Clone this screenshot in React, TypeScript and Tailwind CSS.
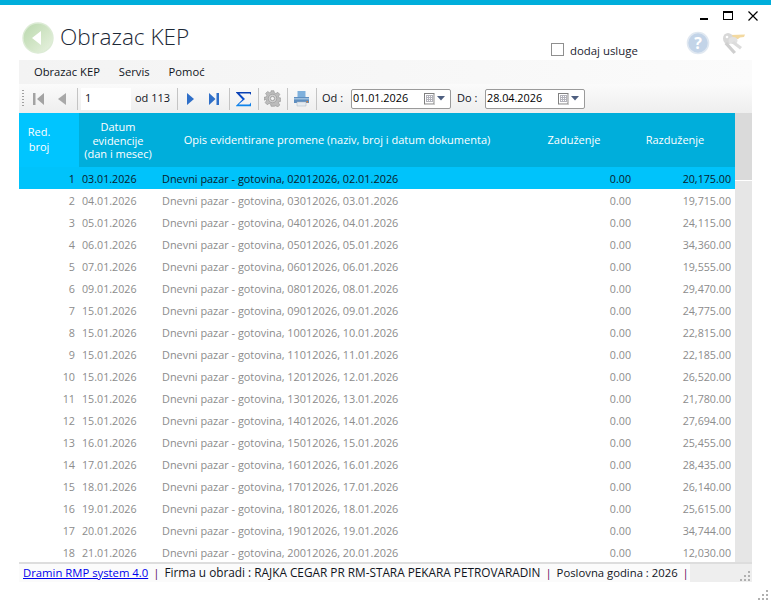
const rows = [
  ["1", "03.01.2026", "02012026, 02.01.2026", "20,175.00"],
  ["2", "04.01.2026", "03012026, 03.01.2026", "19,715.00"],
  ["3", "05.01.2026", "04012026, 04.01.2026", "24,115.00"],
  ["4", "06.01.2026", "05012026, 05.01.2026", "34,360.00"],
  ["5", "07.01.2026", "06012026, 06.01.2026", "19,555.00"],
  ["6", "09.01.2026", "08012026, 08.01.2026", "29,470.00"],
  ["7", "15.01.2026", "09012026, 09.01.2026", "24,775.00"],
  ["8", "15.01.2026", "10012026, 10.01.2026", "22,815.00"],
  ["9", "15.01.2026", "11012026, 11.01.2026", "22,185.00"],
  ["10", "15.01.2026", "12012026, 12.01.2026", "26,520.00"],
  ["11", "15.01.2026", "13012026, 13.01.2026", "21,780.00"],
  ["12", "15.01.2026", "14012026, 14.01.2026", "27,694.00"],
  ["13", "16.01.2026", "15012026, 15.01.2026", "25,455.00"],
  ["14", "17.01.2026", "16012026, 16.01.2026", "28,435.00"],
  ["15", "18.01.2026", "17012026, 17.01.2026", "26,140.00"],
  ["16", "19.01.2026", "18012026, 18.01.2026", "25,615.00"],
  ["17", "20.01.2026", "19012026, 19.01.2026", "34,744.00"],
  ["18", "21.01.2026", "20012026, 20.01.2026", "12,030.00"],
];

const Sep = () => <div className="w-px h-[22px] bg-[#c4c4c4] shrink-0" />;

const BackIcon = () => (
  <svg width="32" height="32" viewBox="0 0 32 32">
    <defs>
      <linearGradient id="bk" x1="0" y1="0" x2="1" y2="1">
        <stop offset="0" stopColor="#b9d8ad" />
        <stop offset="0.55" stopColor="#d3e6c8" />
        <stop offset="1" stopColor="#e9f3e2" />
      </linearGradient>
    </defs>
    <circle cx="16" cy="16" r="15" fill="url(#bk)" stroke="#dcebd5" strokeWidth="1.4" />
    <path d="M10 16 L19 9 V23 Z" fill="#ffffff" />
  </svg>
);

const HelpIcon = () => (
  <svg width="24" height="24" viewBox="0 0 24 24">
    <circle cx="12" cy="12" r="10.5" fill="#c3d4e8" stroke="#e0e8f1" strokeWidth="1.6" />
    <text x="12" y="17.5" textAnchor="middle" fontSize="16" fontWeight="700" fill="#ffffff" fontFamily="Open Sans, sans-serif">?</text>
  </svg>
);

const KeysIcon = () => (
  <svg width="24" height="23" viewBox="0 0 24 23">
    <path d="M8 3 L23 2.500 L22 5 L18 5.500 L16 7 L9 7 Z" fill="#f3d9a0" />
    <ellipse cx="6" cy="6.500" rx="5" ry="5.500" fill="#d8d8d8" />
    <circle cx="5" cy="5" r="1.300" fill="#ffffff" />
    <path d="M5 10 L14 20 L11.500 22 L2.500 12 Z" fill="#cfcfcf" />
    <ellipse cx="11" cy="8.500" rx="4.500" ry="3.500" fill="#e2e2e2" />
    <path d="M12 9 L20 15 L18 17.500 L9.500 11 Z" fill="#dcdcdc" />
  </svg>
);

const SigmaIcon = () => (
  <svg width="17" height="16" viewBox="0 0 17 16">
    <defs>
      <linearGradient id="sg" x1="0" y1="0" x2="0" y2="1">
        <stop offset="0" stopColor="#0a3fb0" />
        <stop offset="0.5" stopColor="#0a50d0" />
        <stop offset="1" stopColor="#0d8cf0" />
      </linearGradient>
    </defs>
    <path d="M1 1 H16 V4 L14.800 2.500 H4.500 L10 8 L3.500 13.500 H14.500 L16 11.500 V15.300 H1 V14.800 L7.500 8.500 L1 1.500 Z" fill="url(#sg)" />
  </svg>
);

const GearIcon = () => (
  <svg width="17" height="17" viewBox="0 0 24 24">
    <path
      d="M10 1h4l.7 3.200 2 .8 2.800-1.700 2.800 2.800-1.700 2.800.8 2 3.100.7v4l-3.200.7-.8 2 1.700 2.800-2.800 2.800-2.800-1.700-2 .8L14 23h-4l-.7-3.200-2-.8-2.800 1.700-2.800-2.800 1.700-2.800-.8-2L0 14.400v-4l3.200-.7.8-2L2.300 4.900l2.800-2.800 2.800 1.700 2-.8z"
      fill="#bcbcbc"
      stroke="#8e8e8e"
      strokeWidth="0.8"
    />
    <circle cx="12" cy="12" r="6" fill="#d0d0d0" stroke="#9a9a9a" />
    <circle cx="12" cy="12" r="3" fill="#f2f2f2" stroke="#8a8a8a" />
  </svg>
);

const PrinterIcon = () => (
  <svg width="17" height="17" viewBox="0 0 17 17">
    <path d="M4.500 1 H12.500 V7 H4.500 Z" fill="#7eb0dc" />
    <path d="M1 7 H16 V13 H1 Z" fill="#5f8fc0" />
    <path d="M1 8 H16 V9.500 H1 Z" fill="#9fc0de" />
    <path d="M4 12 H13 V16 H4 Z" fill="#e6ebf0" stroke="#a9b4c0" strokeWidth="0.5" />
    <rect x="13.500" y="11" width="1.500" height="1.500" fill="#e0813a" />
  </svg>
);

const CalIcon = () => (
  <span className="flex items-center gap-[2px] shrink-0">
    <svg width="11" height="12" viewBox="0 0 11 12">
      <rect x="0.500" y="0.500" width="9.500" height="10.500" fill="#ffffff" stroke="#808080" />
      <path d="M2 2.500h7M2 4.500h7M2 6.500h7M2 8.500h7M2.500 2v7M4.500 2v7M6.500 2v7M8.500 2v7" stroke="#b4b4bc" strokeWidth="1" />
      <path d="M10.500 1.500v10h-9" fill="none" stroke="#c8c8c8" />
    </svg>
    <svg width="8" height="5" viewBox="0 0 8 5">
      <path d="M0 0h8L4 4.500z" fill="#4e5f80" />
    </svg>
  </span>
);

const DateBox = ({ value }: { value: string }) => (
  <div className="w-[100px] h-[20px] bg-white border border-[#9a9a9a] rounded-[2px] flex items-center justify-between pl-[1px] pr-[5px] shrink-0">
    <span className="text-[10.8px] text-black">{value}</span>
    <CalIcon />
  </div>
);

const Grip = () => (
  <svg width="11" height="10" viewBox="0 0 11 10" className="fill-[#b0b0b0]">
    <rect x="8" y="0" width="2" height="2" />
    <rect x="4" y="4" width="2" height="2" />
    <rect x="8" y="4" width="2" height="2" />
    <rect x="0" y="8" width="2" height="2" />
    <rect x="4" y="8" width="2" height="2" />
    <rect x="8" y="8" width="2" height="2" />
  </svg>
);

export default function App() {
  return (
    <div className="w-[771px] h-[601px] bg-white overflow-hidden flex flex-col text-[11px] text-black font-['Open_Sans',sans-serif]">
      <div className="h-[5px] bg-[#00aedb] shrink-0" />

      {/* title */}
      <div className="h-[55px] flex shrink-0">
        <div className="pl-[22px] pt-[17px] flex items-start gap-[6px] w-[500px]">
          <BackIcon />
          <span className="text-[22.6px] leading-[30px] font-light text-[#1c2836]">Obrazac KEP</span>
        </div>
        <div className="flex-1 flex flex-col">
          <div className="h-[19px] flex items-start justify-end pr-[13px] pt-[6px] gap-[15px]">
            <span className="w-[8px] h-[2px] bg-black mt-[7px]" />
            <span className="w-[10px] h-[9px] border border-black border-t-2" />
            <svg width="10" height="10" viewBox="0 0 10 10">
              <path d="M0.500 0.500 L9.500 9.500 M9.500 0.500 L0.500 9.500" stroke="#000" strokeWidth="1.200" />
            </svg>
          </div>
          <div className="flex items-start pl-[51px]">
            <span className="w-[13px] h-[13px] border border-[#8f8f8f] mt-[19px]" />
            <span className="ml-[6px] mt-[18px] w-[68px] whitespace-nowrap text-[11.4px] text-[#1c2430]">dodaj usluge</span>
            <span className="ml-[48px] mt-[7px]"><HelpIcon /></span>
            <span className="ml-[12px] mt-[8px]"><KeysIcon /></span>
          </div>
        </div>
      </div>

      {/* menu + toolbar + table */}
      <div className="w-[733px] ml-[19px] shrink-0">
        <div className="h-[24px] bg-gradient-to-r from-[#f3f3f3] to-[#fbfbfb] flex items-center pl-[15px] gap-[19px] text-[11.200px] text-[#10141c]">
          <span>Obrazac KEP</span>
          <span>Servis</span>
          <span>Pomoć</span>
        </div>

        <div className="h-[29px] bg-gradient-to-b from-[#fbfbfb] to-[#eeeeee] flex items-center text-[#10141c] whitespace-nowrap">
          <div className="ml-[3px] w-[2px] h-[18px] bg-[repeating-linear-gradient(to_bottom,#a0a0a0_0,#a0a0a0_1px,transparent_1px,transparent_3px)]" />
          <svg width="11" height="12" viewBox="0 0 11 12" className="ml-[9px]">
            <path d="M0 0h2.500v12H0zM11 0v12L4 6z" fill="#a3a3a3" />
          </svg>
          <svg width="8" height="12" viewBox="0 0 8 12" className="ml-[14px]">
            <path d="M8 0v12L0 6z" fill="#a8a8a8" />
          </svg>
          <div className="ml-[11px]"><Sep /></div>
          <div className="ml-[3px] w-[50px] h-[22px] bg-white flex items-center pl-[4px]">1</div>
          <span className="ml-[4px] w-[35px]">od 113</span>
          <div className="ml-[7px]"><Sep /></div>
          <svg width="7" height="12" viewBox="0 0 7 12" className="ml-[9px]">
            <path d="M0 0v12L7 6z" fill="#2f6fc8" />
          </svg>
          <svg width="10" height="12" viewBox="0 0 10 12" className="ml-[15px]">
            <path d="M0 0v12L6.500 6zM7.500 0H10v12H7.500z" fill="#2f6fc8" />
          </svg>
          <div className="ml-[10px]"><Sep /></div>
          <span className="ml-[5px]"><SigmaIcon /></span>
          <div className="ml-[6px]"><Sep /></div>
          <span className="ml-[5px]"><GearIcon /></span>
          <div className="ml-[6px]"><Sep /></div>
          <span className="ml-[5px]"><PrinterIcon /></span>
          <div className="ml-[6px]"><Sep /></div>
          <span className="ml-[5px] w-[29px]">Od :</span>
          <DateBox value="01.01.2026" />
          <span className="ml-[6px] w-[28px]">Do :</span>
          <DateBox value="28.04.2026" />
        </div>

        <div className="flex h-[449px] overflow-hidden">
          <div className="w-[716px] shrink-0">
            <div className="grid grid-cols-[60px_78px_360px_118px_100px] h-[54px] bg-[#00aedb] text-white text-center items-center">
              <div className="h-full bg-[#00c5ff] flex items-center justify-center leading-[15px] pb-[2px] pr-[20px]">Red.<br />broj</div>
              <div className="leading-[13.500px] pt-[1px]">Datum<br />evidencije<br />(dan i mesec)</div>
              <div>Opis evidentirane promene (naziv, broj i datum dokumenta)</div>
              <div className="pr-[4px]">Zaduženje</div>
              <div className="pr-[20px]">Razduženje</div>
            </div>
            {rows.map((r, i) => (
              <div
                key={r[0]}
                className={
                  i === 0
                    ? "grid grid-cols-[60px_78px_360px_118px_100px] h-[22px] items-center pt-[3px] bg-[#00c3fb] text-[#08202c]"
                    : "grid grid-cols-[60px_78px_360px_118px_100px] h-[22px] items-center pt-[3px] text-[#8c8c8c]"
                }
              >
                <div className="text-right pr-[4px] text-[10.800px]">{r[0]}</div>
                <div className="pl-[3px] text-[10.700px]">{r[1]}</div>
                <div className="pl-[5px] text-[10.900px]">Dnevni pazar - gotovina, {r[2]}</div>
                <div className="text-right pr-[4px] text-[10.700px]">0.00</div>
                <div className="text-right pr-[4px] text-[10.700px]">{r[3]}</div>
              </div>
            ))}
          </div>
          <div className="flex-1 flex flex-col">
            <div className="h-[68px] bg-[#dadada] border-b border-white" />
            <div className="flex-1 bg-[#e6e6e6]" />
          </div>
        </div>

        <div className="h-[20px] border-t-2 border-[#dddddd] bg-[#eeeeee] flex">
          <div className="w-[671px] bg-[#fbfbfb] flex items-center pl-[4px] gap-[5px] whitespace-nowrap text-[11.300px] text-[#10141c]">
            <a className="text-[#0000ee] underline">Dramin RMP system 4.0</a>
            <span className="text-[#5a0a5a]">|</span>
            <span className="text-[11.800px]">Firma u obradi : RAJKA CEGAR PR RM-STARA PEKARA PETROVARADIN</span>
            <span className="text-[#5a0a5a]">|</span>
            <span>Poslovna godina : 2026</span>
            <span className="text-[#5a0a5a]">|</span>
          </div>
          <div className="flex-1 flex items-end justify-end pb-[1px] pr-[1px]"><Grip /></div>
        </div>
      </div>

      <div className="flex justify-end pr-[2px] pt-[8px]"><Grip /></div>
    </div>
  );
}
